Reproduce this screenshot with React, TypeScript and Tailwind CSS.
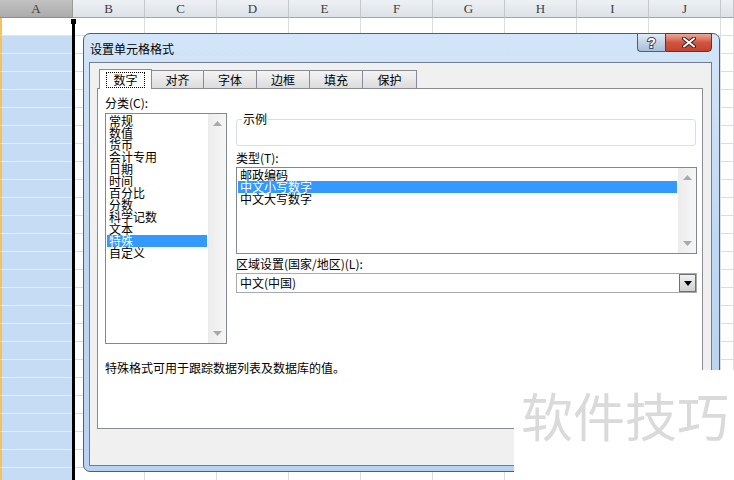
import React from 'react';

const COLS = ['A', 'B', 'C', 'D', 'E', 'F', 'G', 'H', 'I', 'J', ''];
const ROWS = Array.from({ length: 26 }, (_, i) => i);

const CATEGORIES = ['常规', '数值', '货币', '会计专用', '日期', '时间', '百分比', '分数', '科学记数', '文本', '特殊', '自定义'];
const TYPES = ['邮政编码', '中文小写数字', '中文大写数字'];

const TABS: { label: string; w: string }[] = [
  { label: '数字', w: 'w-[53px]' },
  { label: '对齐', w: 'w-[53px]' },
  { label: '字体', w: 'w-[54px]' },
  { label: '边框', w: 'w-[54px]' },
  { label: '填充', w: 'w-[54px]' },
  { label: '保护', w: 'w-[55px]' },
];

function ScrollBar() {
  return (
    <div className="w-[18px] h-full shrink-0 bg-gradient-to-r from-[#ececec] to-[#f6f6f6] flex flex-col items-center justify-between py-[7px]">
      <svg width="9" height="5" viewBox="0 0 9 5">
        <path d="M4.5 0 L9 5 H0 Z" fill="#a9a9a9" />
      </svg>
      <svg width="9" height="5" viewBox="0 0 9 5">
        <path d="M0 0 H9 L4.5 5 Z" fill="#a9a9a9" />
      </svg>
    </div>
  );
}

function Sheet() {
  return (
    <div className="grid grid-cols-[73px_repeat(9,72px)_13px] font-['Liberation_Serif',serif]">
      {COLS.map((c, i) => (
        <div
          key={c + i}
          className={
            i === 0
              ? 'h-[18px] flex items-center justify-center text-[13px] text-[#3c3c3c] bg-gradient-to-b from-[#c2c2c2] to-[#acacac] border-r border-b border-r-[#9a9a9a] border-b-[#8d8d8d]'
              : 'h-[18px] flex items-center justify-center text-[13px] text-[#3c3c3c] bg-gradient-to-b from-[#eef1f4] to-[#dde2e8] border-r border-b border-r-[#c3c8ce] border-b-[#9ea6ae]'
          }
        >
          {c}
        </div>
      ))}
      {ROWS.map((r) =>
        COLS.map((c, i) => (
          <div
            key={r + '-' + i}
            className={
              i === 0
                ? r === 0
                  ? 'h-[18px] bg-white border-l-2 border-l-[#f2c461] border-b border-b-[#dfe6ee]'
                  : 'h-[18px] bg-[#c6dbf4] border-l-2 border-l-[#f2c461] border-b border-b-[#e4edf8]'
                : 'h-[18px] border-r border-b border-[#dadcdf]'
            }
          />
        ))
      )}
    </div>
  );
}

function Dialog() {
  return (
    <div className="absolute left-[83px] top-[33px] w-[637px] h-[439px] rounded-[7px] border border-[#4f5e70] bg-gradient-to-b from-[#d3e5f8] via-[#bed7f2] to-[#b8d3f1] flex flex-col font-['Noto_Sans_CJK_SC','Liberation_Sans',sans-serif] text-[12px] leading-[12px] text-black">
      {/* title bar */}
      <div className="relative h-[28px] shrink-0 flex items-center pl-[6px] pt-[1px]">
        <span>设置单元格格式</span>
        <div className="absolute right-[7px] -top-px flex">
          <div className="w-[28px] h-[19px] rounded-bl-[4px] border border-[#4f5e70] border-r-0 bg-gradient-to-b from-[#e3ecf6] via-[#c3d3e5] to-[#a9bfd8] flex items-center justify-center">
            <span className="text-[14px] leading-[14px] font-bold text-white [paint-order:stroke] [-webkit-text-stroke:2px_#3d4b5c] font-['Liberation_Sans',sans-serif]">?</span>
          </div>
          <div className="w-[47px] h-[19px] rounded-br-[4px] border border-[#4f3a36] bg-gradient-to-b from-[#e9a99b] via-[#d2553f] to-[#c0442e] flex items-center justify-center">
            <svg width="14" height="11" viewBox="0 0 14 11">
              <path d="M2 1.5 L12 9.5 M12 1.5 L2 9.5" stroke="#3a2420" strokeWidth="4" strokeLinecap="round" />
              <path d="M2 1.5 L12 9.5 M12 1.5 L2 9.5" stroke="#ffffff" strokeWidth="2" strokeLinecap="round" />
            </svg>
          </div>
        </div>
      </div>

      {/* client area */}
      <div className="flex-1 ml-[5px] mr-[7px] mb-[5px] border border-[#6e7e90] bg-[#f0f0f0] flex flex-col">
        <div className="flex flex-col ml-[7px] mr-[8px] pt-[6px]">
          {/* tabs */}
          <div className="flex items-end h-[19px] pl-[2px]">
            {TABS.map((t, i) =>
              i === 0 ? (
                <div
                  key={t.label}
                  className={t.w + ' h-[20px] -mb-px relative z-10 bg-white border border-b-0 border-[#898c95] flex items-center justify-center'}
                >
                  <span className="px-[6px] py-[1px] border border-dotted border-black">{t.label}</span>
                </div>
              ) : (
                <div
                  key={t.label}
                  className={t.w + ' h-[18px] -ml-px bg-gradient-to-b from-[#f4f4f4] to-[#dcdcdc] border border-b-0 border-[#898c95] flex items-center justify-center'}
                >
                  {t.label}
                </div>
              )
            )}
          </div>

          {/* tab panel */}
          <div className="h-[341px] bg-white border border-[#898c95] pt-[8px] pl-[7px] pr-[5px] flex flex-col">
            <div className="flex gap-[9px]">
              {/* left column */}
              <div className="w-[122px] flex flex-col">
                <div className="h-[16px]">分类(C):</div>
                <div className="h-[231px] border border-[#828790] flex">
                  <div className="flex-1 pt-[1px] px-[1px]">
                    {CATEGORIES.map((c) => (
                      <div
                        key={c}
                        className={c === '特殊' ? 'h-[12px] pl-[2px] bg-[#3399ff] text-white' : 'h-[12px] pl-[2px]'}
                      >
                        {c}
                      </div>
                    ))}
                  </div>
                  <ScrollBar />
                </div>
              </div>

              {/* right column */}
              <div className="flex-1 flex flex-col">
                <div className="relative mt-[22px] h-[27px] mr-[1px] rounded-[3px] border border-[#d5dfe5]">
                  <span className="absolute -top-[7px] left-[5px] bg-white px-[1px]">示例</span>
                </div>
                <div className="h-[21px] pt-[6px]">类型(T):</div>
                <div className="h-[87px] border border-[#828790] flex">
                  <div className="flex-1 pt-[1px] px-[1px]">
                    {TYPES.map((t) => (
                      <div
                        key={t}
                        className={t === '中文小写数字' ? 'h-[12px] pl-[2px] bg-[#3399ff] text-white' : 'h-[12px] pl-[2px]'}
                      >
                        {t}
                      </div>
                    ))}
                  </div>
                  <ScrollBar />
                </div>
                <div className="h-[19px] pt-[4px]">区域设置(国家/地区)(L):</div>
                <div className="h-[20px] border border-[#a7abb0] flex items-center">
                  <span className="flex-1 pl-[3px]">中文(中国)</span>
                  <div className="w-[17px] h-[18px] border border-[#707070] bg-gradient-to-b from-[#f2f2f2] to-[#d0d0d0] flex items-center justify-center">
                    <svg width="8" height="5" viewBox="0 0 8 5">
                      <path d="M0 0 H8 L4 5 Z" fill="#000000" />
                    </svg>
                  </div>
                </div>
              </div>
            </div>

            <div className="mt-[18px]">特殊格式可用于跟踪数据列表及数据库的值。</div>
          </div>
        </div>
      </div>
    </div>
  );
}

export default function App() {
  return (
    <div className="relative w-[734px] h-[480px] overflow-hidden bg-white">
      <Sheet />

      {/* column selection outline */}
      <div className="absolute left-[72px] top-[20px] bottom-0 w-[3px] bg-black" />
      <div className="absolute left-[71px] top-[19px] w-[5px] h-[5px] bg-black" />

      <Dialog />

      {/* watermark */}
      <div className="absolute left-[514px] top-[370px] w-[220px] h-[110px] bg-white pl-[7px] pt-[19px]">
        <span className="text-[52px] leading-[52px] text-[#dadada] font-['Noto_Sans_CJK_SC',sans-serif] whitespace-nowrap">软件技巧</span>
      </div>
    </div>
  );
}
